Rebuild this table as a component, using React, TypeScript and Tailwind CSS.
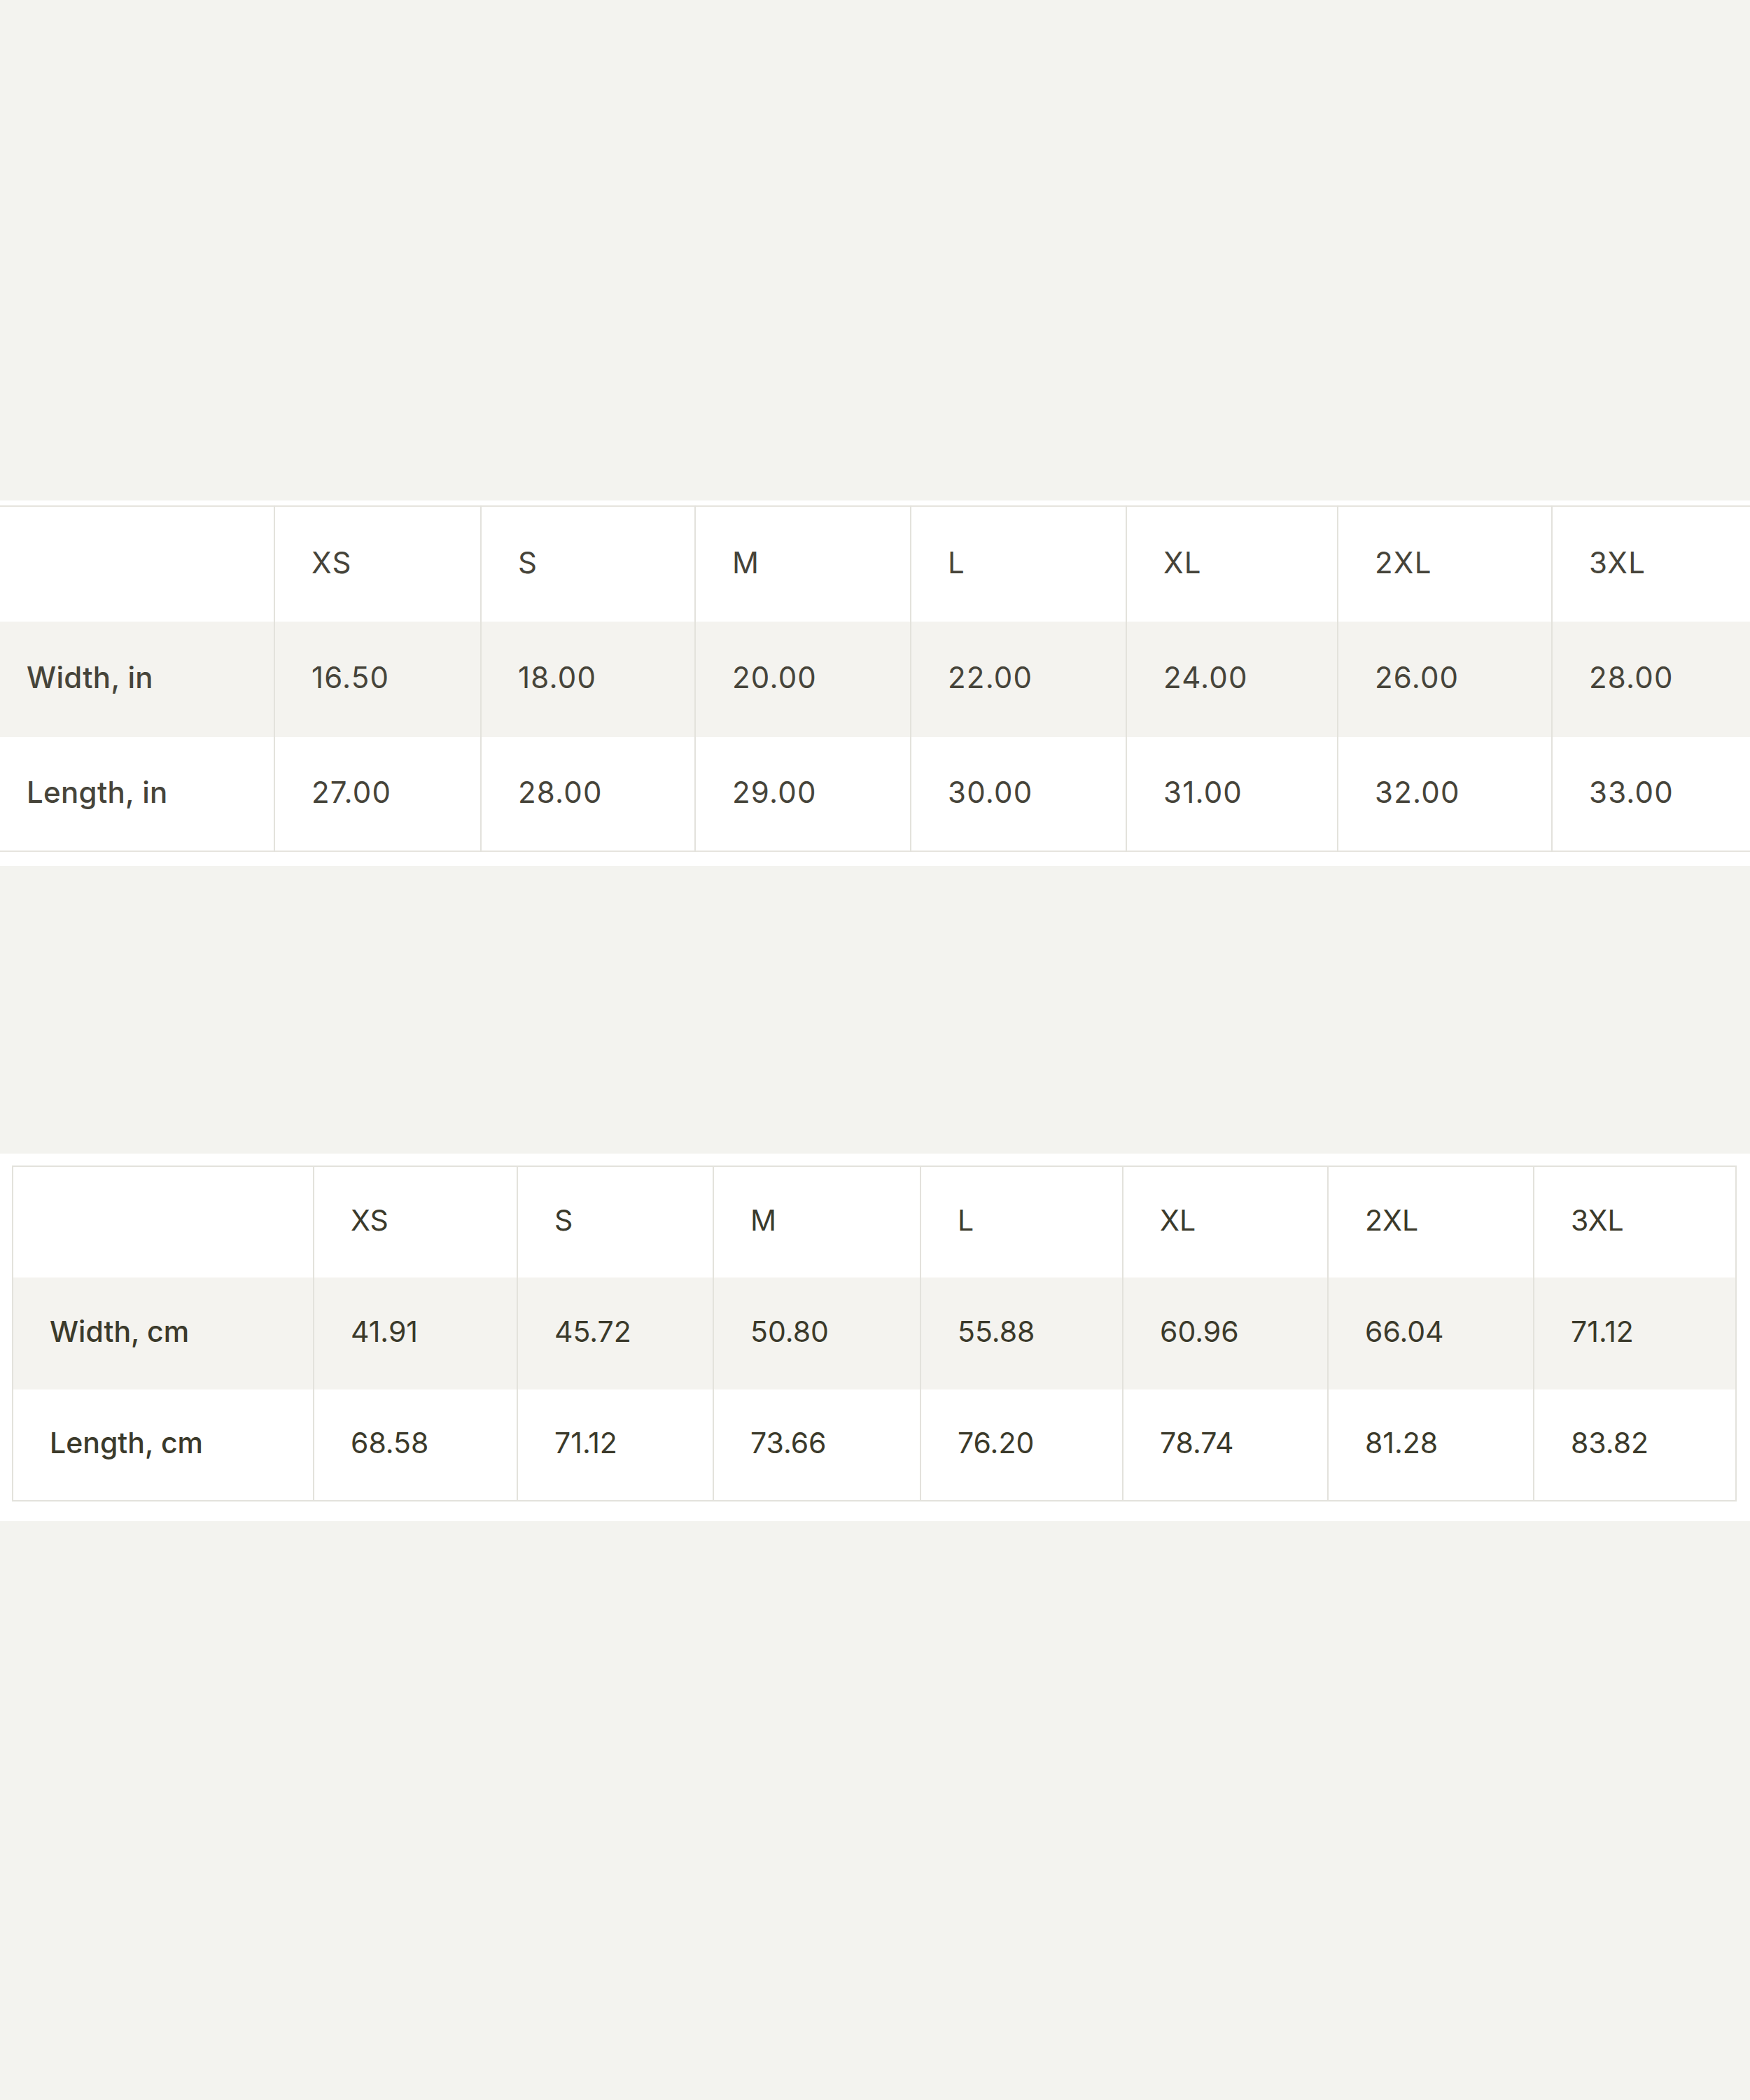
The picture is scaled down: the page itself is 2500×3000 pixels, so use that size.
const sizes = ["XS", "S", "M", "L", "XL", "2XL", "3XL"];

const inchRows = [
  { label: "Width, in", values: ["16.50", "18.00", "20.00", "22.00", "24.00", "26.00", "28.00"] },
  { label: "Length, in", values: ["27.00", "28.00", "29.00", "30.00", "31.00", "32.00", "33.00"] },
];

const cmRows = [
  { label: "Width, cm", values: ["41.91", "45.72", "50.80", "55.88", "60.96", "66.04", "71.12"] },
  { label: "Length, cm", values: ["68.58", "71.12", "73.66", "76.20", "78.74", "81.28", "83.82"] },
];

// column widths taken from the screenshot
const inchCols = [392, 295, 306, 308, 308, 302, 306, 283];
const cmCols = [430, 291, 280, 296, 289, 293, 294, 289];

type Row = { label: string; values: string[] };

function SizeTable({
  rows,
  cols,
  rowHeights,
  firstPad,
  boxed,
  textClass,
  labelClass,
  valueClass,
}: {
  rows: Row[];
  cols: number[];
  rowHeights: number[];
  firstPad: string;
  boxed: boolean;
  textClass: string;
  labelClass: string;
  valueClass: string;
}) {
  return (
    <table
      className={
        "table-fixed border-collapse " +
        textClass +
        " " +
        (boxed ? "border-2 border-[#e3e2dc]" : "border-y-2 border-[#e6e4de]")
      }
    >
      <colgroup>
        {cols.map((w, i) => (
          <col key={i} style={{ width: w }} />
        ))}
      </colgroup>
      <tbody>
        <tr className="bg-white" style={{ height: rowHeights[0] }}>
          <td className={firstPad}></td>
          {sizes.map((s) => (
            <td key={s} className={"border-l-2 border-[#e3e2dc] pl-[52px] pb-[5px] align-middle " + valueClass}>
              {s}
            </td>
          ))}
        </tr>
        {rows.map((r, ri) => (
          <tr
            key={r.label}
            className={ri % 2 === 0 ? "bg-[#f4f3ef]" : "bg-white"}
            style={{ height: rowHeights[ri + 1] }}
          >
            <td className={firstPad + " pb-[5px] align-middle font-medium " + labelClass}>{r.label}</td>
            {r.values.map((v, i) => (
              <td key={i} className={"border-l-2 border-[#e3e2dc] pl-[52px] pb-[5px] align-middle " + valueClass}>
                {v}
              </td>
            ))}
          </tr>
        ))}
      </tbody>
    </table>
  );
}

export default function App() {
  return (
    <div
      className="min-h-[3000px] w-[2500px] overflow-hidden bg-[#f3f3ef] leading-none"
      style={{ fontFamily: "Inter, 'Liberation Sans', sans-serif" }}
    >
      <div className="h-[715px]"></div>

      <section className="bg-white pt-[7px] pb-[20px]">
        <SizeTable
          rows={inchRows}
          cols={inchCols}
          rowHeights={[165, 165, 163]}
          firstPad="pl-[38px]"
          boxed={false}
          textClass="text-[42px] text-[#46443a]"
          labelClass="tracking-[0.3px]"
          valueClass="tracking-[1.2px]"
        />
      </section>

      <div className="h-[411px]"></div>

      <section className="bg-white px-[17px] pt-[17px] pb-[28px]">
        <SizeTable
          rows={cmRows}
          cols={cmCols}
          rowHeights={[159, 160, 159]}
          firstPad="pl-[52px]"
          boxed={true}
          textClass="text-[41px] text-[#3b3a2b]"
          labelClass=""
          valueClass=""
        />
      </section>
    </div>
  );
}
